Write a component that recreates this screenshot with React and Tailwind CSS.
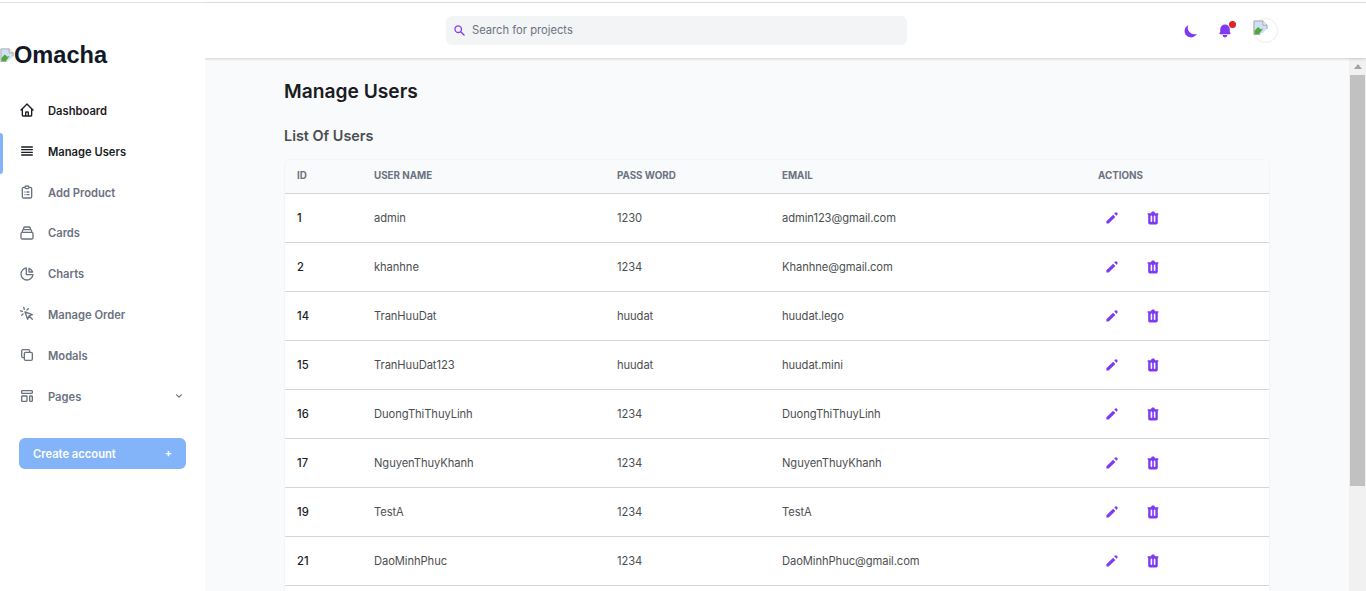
import React from "react";

const sans = "font-['Inter','Liberation_Sans',sans-serif]";

function Stroke({ d, className = "w-4 h-4" }) {
  return (
    <svg className={className} fill="none" stroke="currentColor" strokeWidth="2" strokeLinecap="round" strokeLinejoin="round" viewBox="0 0 24 24" aria-hidden="true">
      <path d={d} />
    </svg>
  );
}

function Solid({ d, className = "w-4 h-4" }) {
  return (
    <svg className={className} fill="currentColor" viewBox="0 0 20 20" aria-hidden="true">
      <path fillRule="evenodd" clipRule="evenodd" d={d} />
    </svg>
  );
}

function BrokenImage({ className = "" }) {
  return (
    <svg className={className} viewBox="0 0 16 16" aria-hidden="true">
      <path d="M1 1H10.5L15 5.5V9.5L7.5 16H1Z" fill="#cfe0f5" />
      <path d="M1.5 15V11.5L5.5 7.5L8.5 10L11 9L6.5 15Z" fill="#4fa838" />
      <path d="M7.5 15.5H1V1H10.5L15 5.5V9.5" fill="none" stroke="#a3a3a3" />
      <path d="M10.5 1V5.5H15" fill="#f5f5f5" stroke="#a3a3a3" />
    </svg>
  );
}

const nav = [
  { label: "Dashboard", dark: true, d: "M3 12l2-2m0 0l7-7 7 7M5 10v10a1 1 0 001 1h3m10-11l2 2m-2-2v10a1 1 0 01-1 1h-3m-6 0a1 1 0 001-1v-4a1 1 0 011-1h2a1 1 0 011 1v4a1 1 0 001 1m-6 0h6" },
  { label: "Manage Users", dark: true, active: true, d: "M4 6h16M4 10h16M4 14h16M4 18h16" },
  { label: "Add Product", d: "M9 5H7a2 2 0 00-2 2v12a2 2 0 002 2h10a2 2 0 002-2V7a2 2 0 00-2-2h-2M9 5a2 2 0 002 2h2a2 2 0 002-2M9 5a2 2 0 012-2h2a2 2 0 012 2m-3 7h3m-3 4h3m-6-4h.01M9 16h.01" },
  { label: "Cards", d: "M19 11H5m14 0a2 2 0 012 2v6a2 2 0 01-2 2H5a2 2 0 01-2-2v-6a2 2 0 012-2m14 0V9a2 2 0 00-2-2M5 11V9a2 2 0 012-2m0 0V5a2 2 0 012-2h6a2 2 0 012 2v2M7 7h10" },
  { label: "Charts", d: "M11 3.055A9.001 9.001 0 1020.945 13H11V3.055zM20.488 9H15V3.512A9.025 9.025 0 0120.488 9z" },
  { label: "Manage Order", d: "M15 15l-2 5L9 9l11 4-5 2zm0 0l5 5M7.188 2.239l.777 2.897M5.136 7.965l-2.898-.777M13.95 4.05l-2.122 2.122m-5.657 5.656l-2.12 2.122" },
  { label: "Modals", d: "M8 16H6a2 2 0 01-2-2V6a2 2 0 012-2h8a2 2 0 012 2v2m-6 12h8a2 2 0 002-2v-8a2 2 0 00-2-2h-8a2 2 0 00-2 2v8a2 2 0 002 2z" },
  { label: "Pages", chevron: true, d: "M4 5a1 1 0 011-1h14a1 1 0 011 1v2a1 1 0 01-1 1H5a1 1 0 01-1-1V5zM4 13a1 1 0 011-1h6a1 1 0 011 1v6a1 1 0 01-1 1H5a1 1 0 01-1-1v-6zM16 13a1 1 0 011-1h2a1 1 0 011 1v6a1 1 0 01-1 1h-2a1 1 0 01-1-1v-6z" },
];

const users = [
  ["1", "admin", "1230", "admin123@gmail.com"],
  ["2", "khanhne", "1234", "Khanhne@gmail.com"],
  ["14", "TranHuuDat", "huudat", "huudat.lego"],
  ["15", "TranHuuDat123", "huudat", "huudat.mini"],
  ["16", "DuongThiThuyLinh", "1234", "DuongThiThuyLinh"],
  ["17", "NguyenThuyKhanh", "1234", "NguyenThuyKhanh"],
  ["19", "TestA", "1234", "TestA"],
  ["21", "DaoMinhPhuc", "1234", "DaoMinhPhuc@gmail.com"],
];

const PENCIL = "M13.586 3.586a2 2 0 112.828 2.828l-.793.793-2.828-2.828.793-.793zM11.379 5.793L3 14.172V17h2.828l8.38-8.379-2.83-2.828z";
const TRASH = "M9 2a1 1 0 00-.894.553L7.382 4H4a1 1 0 000 2v10a2 2 0 002 2h8a2 2 0 002-2V6a1 1 0 100-2h-3.382l-.724-1.447A1 1 0 0011 2H9zM7 8a1 1 0 012 0v6a1 1 0 11-2 0V8zm5-1a1 1 0 00-1 1v6a1 1 0 102 0V8a1 1 0 00-1-1z";

function Sidebar() {
  return (
    <aside className="relative z-20 w-[205px] shrink-0 bg-white flex flex-col">
      <div className="h-[87px] pt-[37px] flex items-start">
        <div className="flex items-center h-[30px]">
          <BrokenImage className="w-[14px] h-[14px] shrink-0" />
          <span className="font-['Liberation_Sans',sans-serif] font-bold text-[23.6px] leading-[30px] text-[#111827]">Omacha</span>
        </div>
      </div>
      <ul className="flex flex-col">
        {nav.map((n) => (
          <li key={n.label} className="relative h-[40.8px] flex items-center pl-[19px] pr-[20px]">
            {n.active && <span className="absolute left-0 top-[2px] bottom-[-2px] w-[3px] rounded-r-[4px] bg-[#83b4f9]" />}
            <span className={n.dark ? "text-[#1a1c23]" : "text-[#6b7280]"}>
              <Stroke d={n.d} />
            </span>
            <span className={`ml-[13px] pt-[2px] text-[11.2px] font-semibold ${n.dark ? "text-[#1a1c23]" : "text-[#6b7280]"}`}>{n.label}</span>
            {n.chevron && (
              <svg className="ml-auto w-[12px] h-[12px] text-[#6b7280]" fill="currentColor" viewBox="0 0 20 20" aria-hidden="true">
                <path fillRule="evenodd" clipRule="evenodd" d="M5.293 7.293a1 1 0 011.414 0L10 10.586l3.293-3.293a1 1 0 111.414 1.414l-4 4a1 1 0 01-1.414 0l-4-4a1 1 0 010-1.414z" />
              </svg>
            )}
          </li>
        ))}
      </ul>
      <div className="mt-[22px] px-[19px]">
        <button className="w-[167px] h-[31px] rounded-[6px] bg-[#83b4f9] text-white text-[11.2px] font-semibold flex items-center justify-between pl-[14px] pr-[14px]">
          <span className="pt-[1px]">Create account</span>
          <span className="text-[10.5px] font-bold leading-none">+</span>
        </button>
      </div>
    </aside>
  );
}

function Header() {
  return (
    <header className="relative z-10 h-[55px] shrink-0 bg-white shadow-[0_1px_3px_rgba(0,0,0,0.12),0_1px_2px_rgba(0,0,0,0.06)] flex items-center">
      <div className="ml-[241px] w-[461px] h-[29px] mb-[1px] rounded-[6px] bg-[#f3f4f6] flex items-center pl-[7px]">
        <Solid d="M8 4a4 4 0 100 8 4 4 0 000-8zM2 8a6 6 0 1110.89 3.476l4.817 4.817a1 1 0 01-1.414 1.414l-4.816-4.816A6 6 0 012 8z" className="w-[13px] h-[13px] text-[#7e3af2]" />
        <span className="ml-[6px] text-[11.2px] text-[#6b7280]">Search for projects</span>
      </div>
      <div className="ml-[274px] flex items-center">
        <Solid d="M17.293 13.293A8 8 0 016.707 2.707a8.001 8.001 0 1010.586 10.586z" className="ml-[2px] mt-[1px] w-4 h-4 text-[#7e3af2]" />
        <span className="relative ml-[18px] mt-[1px]">
          <Solid d="M10 2a6 6 0 00-6 6v3.586l-.707.707A1 1 0 004 14h12a1 1 0 00.707-1.707L16 11.586V8a6 6 0 00-6-6zM10 18a3 3 0 01-3-3h6a3 3 0 01-3 3z" className="w-4 h-4 text-[#7e3af2]" />
          <span className="absolute right-[-3px] top-[-2px] w-[7px] h-[7px] rounded-full bg-[#e02424]" />
        </span>
        <span className="ml-[20px] w-[25px] h-[25px] rounded-full border border-[#eeeeee] bg-white pt-[1px]">
          <BrokenImage className="w-[15px] h-[15px] -ml-[1px]" />
        </span>
      </div>
    </header>
  );
}

function Table() {
  return (
    <div className="w-[986px] rounded-t-[6px] border border-[#f3f4f6] border-b-0 bg-white overflow-hidden">
      <table className="w-full table-fixed border-collapse">
        <thead>
          <tr className="h-[33px] bg-[#f9fafb] border-b border-[#d5d6d7] text-left text-[9.8px] font-bold text-[#6b7280] uppercase">
            <th className="w-[77px] pl-[12px] font-bold">ID</th>
            <th className="w-[243px] pl-[12px] font-bold">User Name</th>
            <th className="w-[165px] pl-[12px] font-bold">Pass Word</th>
            <th className="w-[316px] pl-[12px] font-bold">Email</th>
            <th className="pl-[12px] font-bold">Actions</th>
          </tr>
        </thead>
        <tbody>
          {users.map((u) => (
            <tr key={u[0]} className="h-[49px] border-b border-[#d5d6d7] text-[11.2px] tracking-[-0.08px] text-[#4c4f52]">
              <td className="pl-[12px] pt-[1px] tracking-normal font-[550] text-[#1a1c23]">{u[0]}</td>
              <td className="pl-[12px] pt-[1px]">{u[1]}</td>
              <td className="pl-[12px] pt-[1px]">{u[2]}</td>
              <td className="pl-[12px] pt-[1px]">{u[3]}</td>
              <td className="pl-[12px]">
                <div className="flex items-center gap-[13px]">
                  <button className="w-[28px] flex justify-center text-[#7e3af2]"><Solid d={PENCIL} /></button>
                  <button className="w-[28px] flex justify-center text-[#7e3af2]"><Solid d={TRASH} /></button>
                </div>
              </td>
            </tr>
          ))}
          <tr className="h-[49px]"><td colSpan={5} /></tr>
        </tbody>
      </table>
    </div>
  );
}

function Scrollbar() {
  return (
    <div className="w-[17px] shrink-0 bg-[#f1f1f1] flex flex-col items-center pt-[6px]">
      <span className="w-0 h-0 border-x-[4px] border-x-transparent border-b-[5px] border-b-[#a3a3a3]" />
      <span className="mt-[6px] w-[15px] h-[411px] bg-[#c1c1c1]" />
    </div>
  );
}

export default function App() {
  return (
    <div className={`${sans} h-[591px] overflow-hidden bg-white flex flex-col`}>
      <div className="h-[3px] shrink-0 bg-white border-b border-[#e2e2e2]" />
      <div className="flex-1 min-h-0 flex">
        <Sidebar />
        <div className="flex-1 min-w-0 flex flex-col bg-[#f9fafb]">
          <Header />
          <div className="flex-1 min-h-0 flex">
            <main className="flex-1 min-w-0 overflow-hidden pl-[79px] pt-[20px]">
              <h1 className="text-[19.2px] leading-[26px] font-semibold text-[#1a1c23]">Manage Users</h1>
              <h2 className="mt-[22px] mb-[13px] text-[14.4px] leading-[20px] font-semibold text-[#4c4f52]">List Of Users</h2>
              <Table />
            </main>
            <Scrollbar />
          </div>
        </div>
      </div>
    </div>
  );
}
